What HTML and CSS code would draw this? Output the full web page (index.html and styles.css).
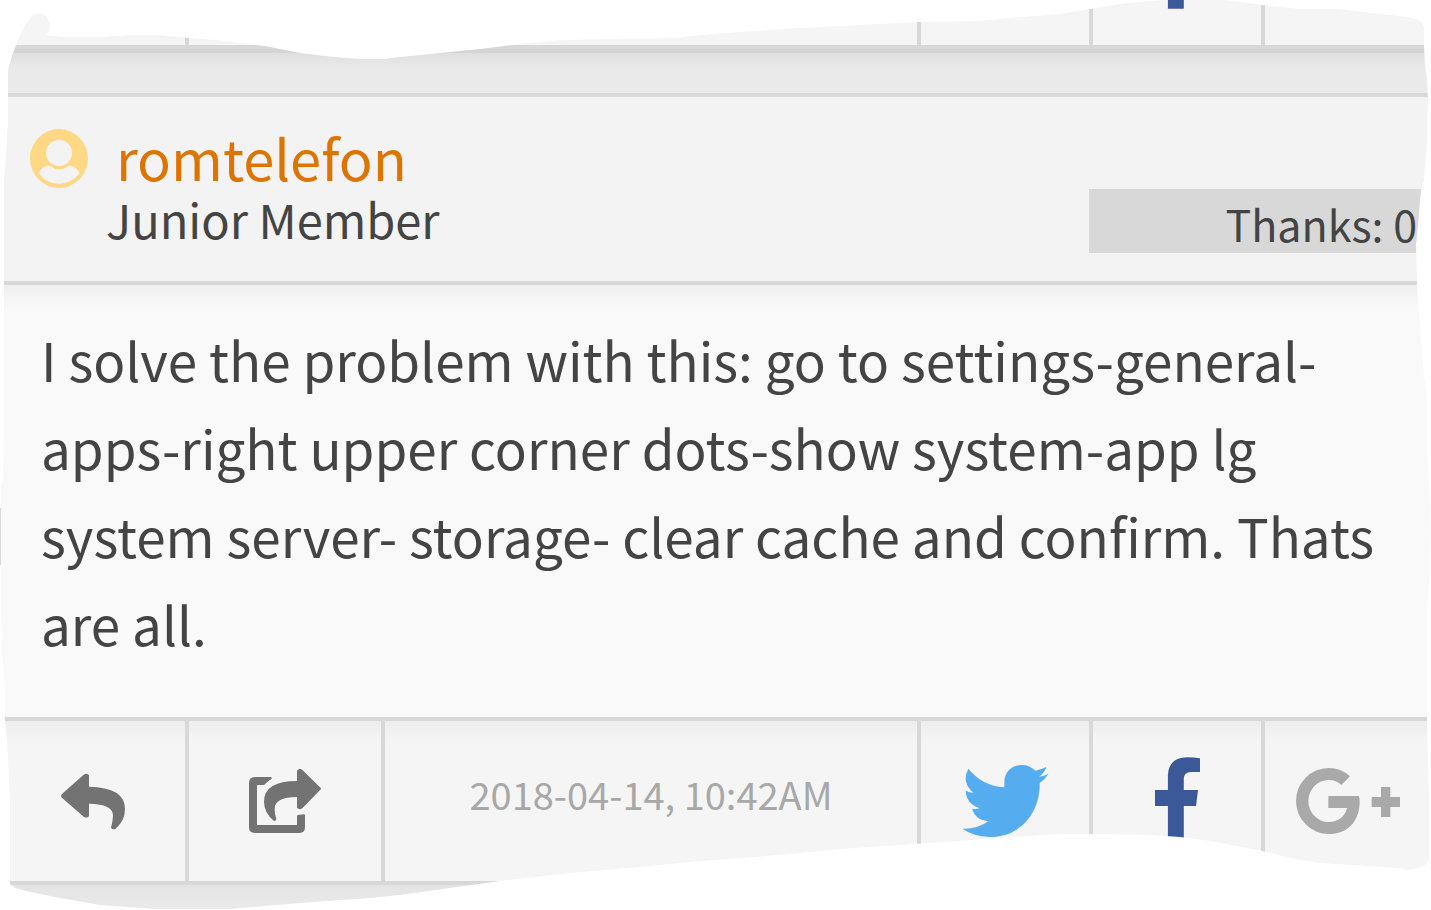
FILE: index.html
```html
<!DOCTYPE html>
<html lang="en">
<head>
    <meta charset="UTF-8">
    <meta name="viewport" content="width=device-width, initial-scale=1.0">
    <title>romtelefon</title>
    <link rel="stylesheet" href="styles.css">
</head>
<body>
    <main class="thread">
        <div class="previous-post">
            <div class="actions">
                <span class="action"></span>
                <span class="action"></span>
                <span class="action"></span>
                <span class="action"></span>
                <a class="action" href="#" aria-label="Facebook">
                    <svg class="icon facebook" width="45" height="88" viewBox="750 168 136 264"><path d="M789 432V315H750V267H789V222Q792 168 847 168Q868 168 886 171V212H858Q838 213 837 232V267H880L874 315H837V432z"/></svg>
                </a>
                <span class="action"></span>
            </div>
        </div>

        <div class="post-gap"></div>

        <article class="post">
            <header class="post-header">
                <svg class="avatar" width="58" height="59" viewBox="90 57 174 177">
                    <ellipse class="avatar-bg" cx="177" cy="145.5" rx="87" ry="88.5"/>
                    <circle class="avatar-person" cx="177" cy="129" r="39"/>
                    <path class="avatar-person" d="M116 190Q124 168 149 167Q177 189 206 167Q230 168 239 190Q215 221 177 221Q138 221 116 190z"/>
                </svg>
                <div class="author">
                    <a class="author-name" href="#">romtelefon</a>
                    <p class="author-rank">Junior Member</p>
                </div>
                <p class="thanks">Thanks: 0</p>
            </header>

            <p class="post-body">I solve the problem with this: go to settings-general-<br>apps-right upper corner dots-show system-app lg<br>system server- storage- clear cache and confirm. Thats<br>are all.</p>

            <footer class="actions">
                <button class="action" type="button" aria-label="Reply">
                    <svg class="icon" width="64" height="57" viewBox="183 217 192 171"><path d="M183 285Q184 280 190 276L251 222Q262 215 267 224V258Q375 260 375 325Q375 360 347 384Q339 389 333 382Q338 362 339 345Q339 310 267 309V346Q262 354 251 348L190 295Q183 290 183 285z"/></svg>
                </button>
                <button class="action" type="button" aria-label="Share">
                    <svg class="icon" width="72" height="64" viewBox="747 207 216 192">
                        <path d="M815 236Q817 231 810 231H765Q747 231 747 249V382Q747 399 764 399H898Q915 399 915 382V346Q915 343 911 343Q904 345 896 344Q891 344 891 349V375H771V255H792Q803 244 815 236z"/>
                        <path d="M963 267L908 324Q900 331 891 324V291Q824 291 824 327Q824 342 829 356Q829 363 822 363Q792 338 792 305Q792 243 891 243V212Q900 202 908 211L963 265z"/>
                    </svg>
                </button>
                <time class="action date" datetime="2018-04-14T10:42">2018-04-14, 10:42AM</time>
                <a class="action" href="#" aria-label="Twitter">
                    <svg class="icon twitter" width="87" height="72" viewBox="180 192 261 216"><path d="M199 203Q240 254 307 259V243C308 211 331 192 359 192Q383 192 400 209Q417 206 433 198Q428 215 411 227Q426 225 440 219Q428 235 413 246C415 330 360 408 263 408Q215 406 181 383Q226 385 259 361Q220 357 210 323Q222 325 233 322Q193 308 191 269Q202 275 215 275Q177 245 199 203z"/></svg>
                </a>
                <a class="action" href="#" aria-label="Facebook">
                    <svg class="icon facebook" width="45" height="88" viewBox="750 168 136 264"><path d="M789 432V315H750V267H789V222Q792 168 847 168Q868 168 886 171V212H858Q838 213 837 232V267H880L874 315H837V432z"/></svg>
                </a>
                <a class="action" href="#" aria-label="Google Plus">
                    <svg class="icon google" width="106" height="66" viewBox="1167 201 318 198">
                        <path d="M1332 226Q1305 201 1268 201A98 99 0 0 0 1170 300A98 99 0 0 0 1268 399C1325 399 1361 360 1361 302Q1361 293 1359 285H1267V321H1323C1318 345 1297 363 1268 363A61 63 0 0 1 1268 237Q1291 237 1306 252z"/>
                        <path d="M1425 258H1453V288H1482V318H1453V348H1425V318H1397V288H1425z"/>
                    </svg>
                </a>
            </footer>
        </article>

        <div class="post-gap"></div>

        <!-- torn paper edge over the whole thread -->
        <svg class="torn-edge" viewBox="0 0 1431 910" preserveAspectRatio="none" aria-hidden="true">
            <path class="paper" fill-rule="evenodd" d="M0 0H1431V910H0z
                M8 97V70L12 56L18 40L25 25L33 15L40 13L46 16L50 24L49 32L45 35L65 37H100L130 35H157L190 38L215 40L240 43L265 46L280 49L300 53L325 56L345 58L361 59H385L400 57L440 53L480 49L513 45L530 43L563 40L614 39L677 38L700 35L740 32L800 28L860 25L917 22L980 21L1010 18L1060 14L1090 9L1120 4L1150 1L1167 0H1225L1262 5L1300 9H1340L1370 13L1400 16L1416 19L1421 22L1424 28V46L1425 66L1427 78L1428 100L1427 140L1424 180L1421 190L1418 225L1416 245L1417 281L1418 300L1421 340L1424 375L1427 400V455L1430 500L1431 530L1430 570L1427 610V722L1428 760L1429 800V860L1424 866L1410 870L1400 868L1320 863L1290 858L1258 850L1210 841L1180 837L1150 835L1110 834H1060L1010 837L960 841L900 845L840 849L780 855L700 861L640 867L570 873L500 881L450 888L400 895L370 898L300 903L230 909H155L100 905L60 898L30 892L15 888L10 884V800L7 740L5 721V690L2 650L1 600V490L3 480L4 430V180L6 155L8 120z"/>
            <path class="scrap" d="M0 508H1V565H0z"/>
        </svg>
    </main>
</body>
</html>
```
FILE: styles.css
```css
* {
    margin: 0;
    padding: 0;
    box-sizing: border-box;
}

body {
    font-family: 'Noto Sans CJK SC', 'Noto Sans', sans-serif;
    background: #fff;
    color: #444;
}

.thread {
    position: relative;
    height: 100vh;
    overflow: hidden;
    background: #eaeaea;
}

/* Only the bottom of the previous post is visible */
.previous-post {
    display: flex;
    align-items: flex-end;
    height: 49px;
    overflow: hidden;
    border-bottom: 4px solid #d8d8d8;
}

.post-gap {
    height: 44px;
    border-top: 4px solid #d4d4d4;
    background: linear-gradient(#dfdfdf, #eaeaea 16px);
}

.post {
    border-top: 4px solid #d8d8d8;
    border-bottom: 4px solid #d8d8d8;
}

.post + .post-gap {
    border-top: none;
    background: linear-gradient(#e4e4e4, #eaeaea 24px);
}

.post-header {
    display: flex;
    align-items: flex-start;
    padding: 32px 10px 28px 30px;
    background: #f3f3f3;
}

.author {
    flex: 1;
    padding-left: 18px;
}

.author-name {
    display: block;
    padding-left: 10px;
    color: #dd7400;
    font-size: 56px;
    line-height: 56px;
    text-decoration: none;
}

.author-rank {
    font-size: 47px;
    line-height: 68px;
}

.thanks {
    align-self: flex-end;
    width: 332px;
    padding: 4px 4px 0 0;
    background: #d8d8d8;
    font-size: 43px;
    line-height: 60px;
    text-align: right;
}

.avatar-bg {
    fill: #ffd886;
}

.avatar-person {
    fill: #f3f3f3;
}

.post-body {
    padding: 30px 40px 50px 41px;
    border-top: 4px solid #d8d8d8;
    background: linear-gradient(#efefef, #f9f9f9 24px);
    font-size: 53px;
    line-height: 88px;
    white-space: nowrap;
}

.actions {
    display: grid;
    grid-template-columns: 189px 196px 1fr 172px 172px 166px;
    flex: 1;
    height: 160px;
    background: #f5f5f5;
}

.post .actions {
    height: 164px;
    border-top: 4px solid #d8d8d8;
    background: linear-gradient(#ededed, #f5f5f5 20px);
}

.action {
    display: flex;
    align-items: center;
    justify-content: center;
    border: none;
    border-right: 4px solid #d8d8d8;
    background: none;
    font-family: inherit;
}

.action:last-child {
    border-right: none;
}

.date {
    padding-bottom: 16px;
    color: #a8a8a8;
    font-size: 38px;
}

.icon {
    display: block;
    fill: #737373;
}

.twitter {
    fill: #55acee;
}

.facebook {
    fill: #3b5998;
}

.google {
    fill: #a9a9a9;
}

.torn-edge {
    position: absolute;
    inset: 0;
    width: 100%;
    height: 100%;
    pointer-events: none;
}

.paper {
    fill: #fff;
}

.scrap {
    fill: #d8d8d8;
}
```
